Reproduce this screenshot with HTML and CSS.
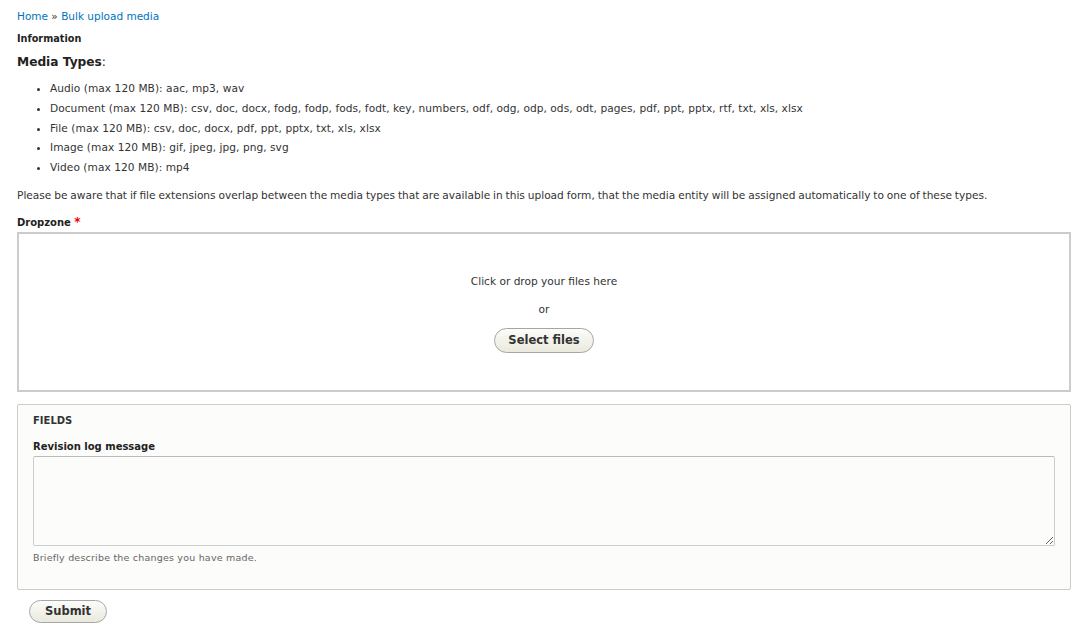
FILE: index.html
```html
<!DOCTYPE html>
<html lang="en">
<head>
  <meta charset="UTF-8">
  <title>Bulk upload media</title>
  <link rel="stylesheet" href="styles.css">
</head>
<body>

  <!-- Breadcrumb -->
  <nav class="breadcrumb">
    <a href="#">Home</a> » <a href="#">Bulk upload media</a>
  </nav>

  <form class="upload-form">
    <div class="info">
      <div class="info-title">Information</div>
      <h3 class="media-types"><strong>Media Types</strong>:</h3>
      <ul class="type-list">
        <li>Audio (max 120 MB): aac, mp3, wav</li>
        <li>Document (max 120 MB): csv, doc, docx, fodg, fodp, fods, fodt, key, numbers, odf, odg, odp, ods, odt, pages, pdf, ppt, pptx, rtf, txt, xls, xlsx</li>
        <li>File (max 120 MB): csv, doc, docx, pdf, ppt, pptx, txt, xls, xlsx</li>
        <li>Image (max 120 MB): gif, jpeg, jpg, png, svg</li>
        <li>Video (max 120 MB): mp4</li>
      </ul>
      <p class="note">Please be aware that if file extensions overlap between the media types that are available in this upload form, that the media entity will be assigned automatically to one of these types.</p>
    </div>

    <!-- Dropzone -->
    <label class="form-label">Dropzone <span class="required">*</span></label>
    <div class="dropzone">
      <div class="dz-message">Click or drop your files here</div>
      <div class="dz-or">or</div>
      <button type="button" class="button">Select files</button>
    </div>

    <!-- Fields -->
    <fieldset class="fields">
      <div class="legend">Fields</div>
      <label class="form-label">Revision log message</label>
      <textarea class="log"></textarea>
      <div class="description">Briefly describe the changes you have made.</div>
    </fieldset>

    <div class="actions">
      <button type="button" class="button">Submit</button>
    </div>
  </form>

</body>
</html>
```

FILE: styles.css
```css
body {
  font-family: "DejaVu Sans", Verdana, sans-serif;
  font-size: 10.6px;
  color: #333;
  margin: 0;
  padding: 9px 19px 0 17px;
  background: #fff;
}

a {
  color: #0074bd;
  text-decoration: none;
}

.breadcrumb {
  font-size: 10.5px;
  line-height: 14px;
  margin-bottom: 9px;
}

.info-title {
  font-size: 9.7px;
  font-weight: bold;
  color: #222;
  line-height: 14px;
}

.media-types {
  font-size: 12.2px;
  font-weight: normal;
  color: #222;
  margin: 8px 0 9px;
  line-height: 16px;
}

.type-list {
  margin: 0;
  padding: 0 0 0 33px;
  list-style: disc;
}

.type-list li {
  line-height: 19.8px;
  letter-spacing: 0.05px;
}

.note {
  margin: 10px 0 13px;
  line-height: 14px;
  word-spacing: -0.5px;
}

.form-label {
  display: block;
  font-size: 10px;
  font-weight: bold;
  color: #222;
  line-height: 14px;
  margin-bottom: 3px;
}

.required {
  color: #e00;
  font-size: 12px;
}

.dropzone {
  border: 2px solid #ccc;
  height: 160px;
  margin-top: -1px;
  display: flex;
  flex-direction: column;
  align-items: center;
  padding-top: 40px;
  box-sizing: border-box;
  background: #fff;
}

.dz-message {
  line-height: 14px;
}

.dz-or {
  margin-top: 14px;
  line-height: 14px;
}

.button {
  font-family: inherit;
  font-size: 11.5px;
  font-weight: bold;
  color: #333;
  white-space: nowrap;
  border: 1px solid #a6a6a6;
  border-radius: 20px;
  background: linear-gradient(#fcfcfa, #e9e9dd);
  padding: 0;
  height: 25px;
  cursor: pointer;
}

.dropzone .button {
  margin-top: 12px;
  width: 100px;
}

.fields {
  margin: 12px 0 0;
  padding: 9px 15px 25px;
  border: 1px solid #ccc;
  border-radius: 2px;
  background: #fcfcfa;
}

.legend {
  font-size: 10px;
  font-weight: bold;
  text-transform: uppercase;
  color: #333;
  line-height: 14px;
  margin-bottom: 12px;
}

.fields .form-label {
  margin-bottom: 2px;
}

.log {
  display: block;
  width: 100%;
  height: 90px;
  box-sizing: border-box;
  border: 1px solid #ccc;
  border-top-color: #bbb;
  border-radius: 2px;
  background: #fcfcfa;
  margin: 0;
}

.description {
  font-size: 9.5px;
  color: #666;
  margin-top: 5px;
  line-height: 13px;
  letter-spacing: 0.2px;
}

.actions {
  padding: 10px 0 0 12px;
}

.actions .button {
  width: 78px;
  height: 23px;
}
```
